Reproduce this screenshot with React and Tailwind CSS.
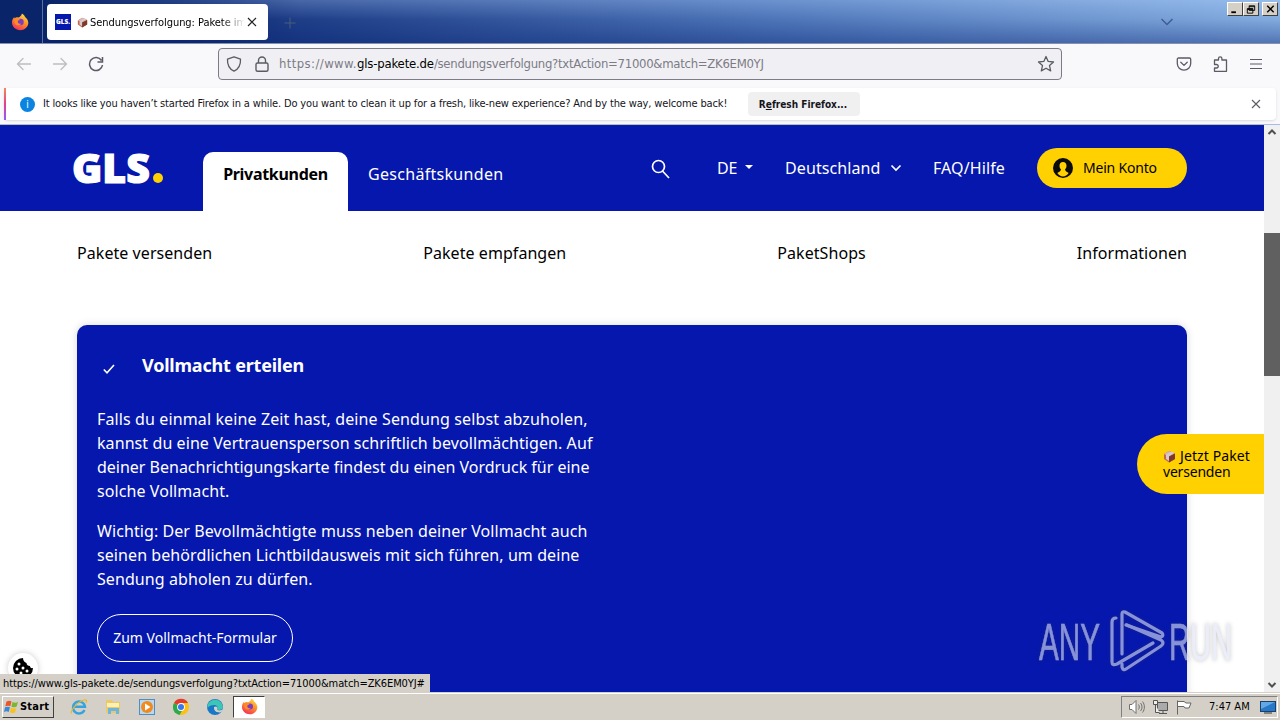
import React from 'react';

const FirefoxIcon = ({ size = 18 }) => (
  <svg width={size} height={size} viewBox="0 0 18 18">
    <defs>
      <linearGradient id="fxBody" x1="0.8" y1="0" x2="0.3" y2="1">
        <stop offset="0" stopColor="#ffe04a" />
        <stop offset="0.45" stopColor="#ff9226" />
        <stop offset="1" stopColor="#f0305c" />
      </linearGradient>
    </defs>
    <path
      d="M11 0.500c2 1.200 2.600 2.300 2.900 3.200C16 5.500 17.300 7.500 17.300 9.800 17.300 14 13.500 17.300 9.200 17.300 4.700 17.300 1 13.800 1 9.600c0-2.200.8-4.200 2.300-5.600 0 .7.200 1.200.5 1.500C5 4.300 6 4.300 7 4.400 8.500 4.500 10.200 3 11 .5z"
      fill="url(#fxBody)"
    />
    <circle cx="9.500" cy="9" r="3.200" fill="#7a3fc0" />
    <path d="M3.500 5.500c2-1 4-.5 5.500 1.500-1.500.2-2.300.8-2.300 1.800 0 1.500 1.300 2.300 3.300 1.900-1.200 2.500-5.500 2-6.500-1z" fill="#ff8a2a" />
  </svg>
);

const BoxIcon = ({ className }) => (
  <svg width="13" height="13" viewBox="0 0 13 13" className={className}>
    <path d="M1 4l5-3 6 2.500v5.500l-6 3.500-5-3.500z" fill="#c4684c" />
    <path d="M1 4l5-3 6 2.500-6 3z" fill="#d9b8aa" />
    <path d="M6 6.500l6-3v5.500l-6 3.500z" fill="#7d3a2c" />
    <path d="M3 5l5.500-3.500 2.500 1L6 6v5l-3-2z" fill="#d6c9d2" />
  </svg>
);

const BackForward = ({ flip }) => (
  <svg width="16" height="16" viewBox="0 0 16 16" className={flip ? 'rotate-180' : ''} fill="none" stroke="#bdbcc2" strokeWidth="1.300" strokeLinecap="round">
    <path d="M1.500 8h13M7 2.500L1.500 8 7 13.500" />
  </svg>
);

const TabStrip = () => (
  <div className="relative flex h-[43px] shrink-0 items-start bg-[linear-gradient(to_right,#0a246a_0%,#102c78_14%,#5178bb_60%,#8db5e6_100%)]">
    <div className="absolute inset-0 bg-[linear-gradient(to_bottom,rgba(170,205,250,0.3),rgba(40,80,150,0.1)_45%,rgba(10,40,120,0.45))]" />
    <div className="absolute inset-y-0 left-0 w-[300px] bg-[linear-gradient(to_right,#0a246a_15%,transparent)]" />
    <div className="relative flex h-[43px] w-[43px] items-center justify-center border-r border-[#5a70a0] pr-[3px]">
      <FirefoxIcon size={18} />
    </div>
    <div className="relative mt-1 ml-1 flex h-9 w-[221px] items-center rounded bg-white pl-2">
      <div className="flex h-4 w-4 items-center justify-center bg-[#0517ad] font-['Open_Sans',sans-serif] text-[6.500px] font-extrabold text-white">GLS.</div>
      <BoxIcon className="ml-[6px] h-[11px] w-[11px]" />
      <div className="mt-[2px] ml-[2px] w-[155px] overflow-hidden whitespace-nowrap bg-[linear-gradient(to_right,#000_85%,transparent)] bg-clip-text text-[11px] tracking-[-0.04px] text-transparent">
        Sendungsverfolgung: Pakete im
      </div>
      <svg width="10" height="10" viewBox="0 0 10 10" className="ml-[2px]" stroke="#222" strokeWidth="1.200">
        <path d="M1 1l8 8M9 1L1 9" />
      </svg>
    </div>
    <svg width="12" height="12" viewBox="0 0 12 12" className="relative mt-[17px] ml-4" stroke="#4b5f78" strokeWidth="1">
      <path d="M6 0.500v11M0.500 6h11" />
    </svg>
    <svg width="12" height="8" viewBox="0 0 12 8" className="relative mt-[18px] ml-auto mr-[54px]" fill="none" stroke="#3d5f95" strokeWidth="1.500">
      <path d="M0.500 1l5.500 5.500L11.500 1" />
    </svg>
    <div className="relative mt-[2px] mr-[2px] flex">
      <WindowButton><path d="M3 9h5v2H3z" fill="#000" stroke="none" /></WindowButton>
      <WindowButton><path d="M5 3h6v5H5zM5 4h6M3 6h6v5H3zM3 7h6" fill="none" /></WindowButton>
      <div className="w-[3px]" />
      <WindowButton><path d="M4 3l7 7M11 3l-7 7" strokeWidth="1.600" /></WindowButton>
    </div>
  </div>
);

const WindowButton = ({ children }) => (
  <div className="h-[14px] w-4 border border-t-white border-r-[#404040] border-b-[#404040] border-l-white bg-[#d4d0c8]">
    <svg width="14" height="12" viewBox="0 0 14 13" stroke="#000">{children}</svg>
  </div>
);

const Toolbar = () => (
  <div className="flex h-[45px] shrink-0 items-start border-t border-[#8591ad] bg-[#f9f9fb] pt-1">
    <div className="flex h-8 w-[218px] items-center gap-5 pl-4">
      <BackForward />
      <BackForward flip />
      <svg width="16" height="16" viewBox="0 0 16 16" fill="none" stroke="#5b5b66" strokeWidth="1.500">
        <path d="M13.500 4.500A6.500 6.500 0 1 0 14.500 9M14.500 1v5h-5" />
      </svg>
    </div>
    <div className="flex h-8 w-[844px] items-center rounded border border-[#7d7c86] bg-[#f0f0f4] pl-[7px] text-[13px] text-[#7c7b85]">
      <svg width="16" height="16" viewBox="0 0 16 16" fill="none" stroke="#5b5b66" strokeWidth="1.300">
        <path d="M8 0.800l6.500 2.400c.3 5.500-2 9.800-6.500 12C3.500 13 1.200 8.700 1.500 3.200z" strokeLinejoin="round" />
      </svg>
      <svg width="16" height="16" viewBox="0 0 16 16" className="ml-3" fill="none" stroke="#5b5b66" strokeWidth="1.400">
        <rect x="2" y="7" width="12" height="8.300" rx="1.500" />
        <path d="M4.500 7V4.500a3.500 3.500 0 0 1 7 0V7" />
      </svg>
      <div className="ml-[9px] w-[758px] whitespace-nowrap">
        <span className="tracking-[0.4px]">https://www.</span>
        <span className="tracking-[-0.175px] text-black">gls-pakete.de</span>
        <span className="tracking-[-0.285px]">/sendungsverfolgung?txtAction=71000&amp;match=ZK6EM0YJ</span>
      </div>
      <svg width="18" height="18" viewBox="0 0 18 18" fill="none" stroke="#5b5b66" strokeWidth="1.300" strokeLinejoin="round">
        <path d="M9 1.500l2.200 4.900 5.300.6-4 3.600 1.200 5.300L9 13.200l-4.700 2.700 1.200-5.300-4-3.600 5.300-.6z" />
      </svg>
    </div>
    <div className="ml-auto flex h-8 items-center gap-5 pr-4">
      <svg width="16" height="16" viewBox="0 0 16 16" fill="none" stroke="#5b5b66" strokeWidth="1.300" strokeLinejoin="round" strokeLinecap="round">
        <path d="M2.500 2h11c.7 0 1.200.5 1.200 1.200V7.500a6.700 6.700 0 0 1-13.400 0V3.200C1.300 2.500 1.800 2 2.500 2zM4.800 6.300L8 9.400l3.200-3.100" />
      </svg>
      <svg width="16" height="16" viewBox="0 0 16 16" fill="none" stroke="#5b5b66" strokeWidth="1.300" strokeLinejoin="round">
        <path d="M6.500 4V2.500a1.700 1.700 0 0 1 3.400 0V4h4.600v11.300H2.500V12h2a1.700 1.700 0 0 0 0-3.500h-2V4z" />
      </svg>
      <svg width="16" height="16" viewBox="0 0 16 16" stroke="#5b5b66" strokeWidth="1.200">
        <path d="M2 3.500h12M2 8h12M2 12.500h12" />
      </svg>
    </div>
  </div>
);

const Notification = () => (
  <div className="flex h-[37px] shrink-0 border-b border-[#a9b8ef] bg-[#f9f9fb] pl-1">
    <div className="flex h-8 w-[1272px] items-center rounded bg-white pr-[15px] shadow-sm">
      <div className="h-8 w-[2px] bg-[linear-gradient(to_bottom,#f08a5c,#e0408c,#9059ff)]" />
      <div className="ml-[14px] flex h-[15px] w-[15px] items-center justify-center rounded-full bg-[#0a84e0] text-[10px] text-white">i</div>
      <div className="ml-2 w-[705px] whitespace-nowrap text-[11px] tracking-[-0.147px] text-[#15141a]">
        It looks like you haven’t started Firefox in a while. Do you want to clean it up for a fresh, like-new experience? And by the way, welcome back!
      </div>
      <div className="flex h-6 w-[112px] items-center justify-center rounded bg-[#f0f0f1] pr-[2px] text-[10px] font-bold whitespace-nowrap text-[#15141a]">
        R<span className="underline">e</span>fresh Firefox...
      </div>
      <svg width="10" height="10" viewBox="0 0 10 10" className="ml-auto" stroke="#5b5b66" strokeWidth="1.100">
        <path d="M1 1l8 8M9 1L1 9" />
      </svg>
    </div>
  </div>
);

const SiteHeader = () => (
  <div className="flex h-[86px] shrink-0 items-start border-t border-[#10207c] bg-[#0517ad] pl-[72px] text-white">
    <div className="mt-[17px] flex w-[131px] items-end font-['Open_Sans',sans-serif] text-[41px] leading-[48px] font-extrabold">
      <div className="w-[81px] [-webkit-text-stroke:1.200px_white]">GLS</div>
      <div className="mb-[8px] h-[10px] w-[10px] rounded-full bg-[#ffd100]" />
    </div>
    <div className="mt-[26px] flex h-[59px] w-[145px] items-start justify-center rounded-t-[10px] bg-white pt-[10px] text-base font-bold tracking-[-0.3px] text-black">
      Privatkunden
    </div>
    <div className="mt-9 ml-5 w-[283px] text-base tracking-[0.3px]">Geschäftskunden</div>
    <svg width="20" height="20" viewBox="0 0 20 20" className="mt-[33px]" fill="none" stroke="#fff" strokeWidth="1.700">
      <circle cx="7.500" cy="7.500" r="6" />
      <path d="M11.500 12l6.500 7" />
    </svg>
    <div className="mt-[30px] ml-[46px] flex w-[68px] items-center text-base">
      <div className="tracking-[-0.3px]">DE</div>
      <span className="ml-2 mb-[2px] border-x-4 border-t-4 border-x-transparent border-t-white" />
    </div>
    <div className="mt-[30px] flex w-[148px] items-center text-base">
      <div className="w-[105px] tracking-[0.1px]">Deutschland</div>
      <svg width="12" height="8" viewBox="0 0 12 8" fill="none" stroke="#fff" strokeWidth="1.700">
        <path d="M1.500 1.500L6 6l4.500-4.500" />
      </svg>
    </div>
    <div className="mt-[30px] w-[104px] text-base tracking-[0.1px]">FAQ/Hilfe</div>
    <div className="mt-[22px] flex h-10 w-[150px] items-center rounded-full bg-[#ffd100] pl-4 text-sm tracking-[-0.2px] text-black">
      <svg width="20" height="20" viewBox="0 0 20 20" className="mr-[10px]">
        <circle cx="10" cy="10" r="10" fill="#0b0b0b" />
        <path d="M10 4c2.200 0 3.500 1.500 3.500 3.700 0 1.600-.7 2.900-1.500 3.600.2 1.700 1 2.200 3.700 3.700-1.500 2.300-3.500 3.500-5.700 3.500s-4.200-1.200-5.700-3.500c2.700-1.500 3.500-2 3.700-3.700-.8-.7-1.500-2-1.500-3.600C6.500 5.500 7.800 4 10 4z" fill="#ffd100" />
      </svg>
      Mein Konto
    </div>
  </div>
);

const navItems = ['Pakete versenden', 'Pakete empfangen', 'PaketShops', 'Informationen'];

const AnyRun = () => (
  <div className="absolute top-[485px] left-[1039px] opacity-60 drop-shadow-[0_0_2px_rgba(60,60,70,0.5)]">
    <svg width="200" height="62" viewBox="0 0 200 62" fill="none" stroke="#dfe4f4">
      <g fill="#dfe4f4" strokeWidth="0.600" fontFamily="'Liberation Sans', sans-serif" fontSize="52">
        <text x="0" y="50" textLength="61" lengthAdjust="spacingAndGlyphs">ANY</text>
        <text x="130" y="50" textLength="63" lengthAdjust="spacingAndGlyphs">RUN</text>
      </g>
      <g strokeWidth="3.200" strokeLinejoin="round" strokeLinecap="round">
        <path d="M77 8q-4 0-4 4V52q0 4 5 2L114 33" />
        <path d="M83 44V4q0-3 3-2L123 23q2 3-1 4L87 15" />
        <path d="M83 54v3q1 4 4 2L122 36q4-3 0-6L88 15" />
      </g>
    </svg>
  </div>
);

const Page = () => (
  <div className="relative flex h-[567px] shrink-0 overflow-hidden bg-white font-['Noto_Sans',sans-serif]">
    <div className="flex w-[1264px] flex-col">
      <SiteHeader />
      <div className="mt-[30px] flex justify-between pr-[77px] pl-[77px] text-base tracking-[0.06px] text-black">
        {navItems.map((item) => (
          <div key={item}>{item}</div>
        ))}
      </div>
      <div className="mx-[77px] mt-[60px] h-[420px] shrink-0 rounded-t-[10px] bg-[#0517ad] px-5 pt-[27px] text-white shadow-[0_0_8px_rgba(0,0,0,0.15)]">
        <div className="flex items-center">
          <svg width="12" height="10" viewBox="0 0 12 10" className="mt-[7px] ml-[6px] mr-[27px]" fill="none" stroke="#fff" strokeWidth="1.600">
            <path d="M0.800 5.500L4 8.800 11 1" />
          </svg>
          <div className="text-lg leading-[26px] font-bold tracking-[-0.2px]">Vollmacht erteilen</div>
        </div>
        <p className="mt-[29px] text-base leading-6 tracking-[0.08px] whitespace-nowrap">
          <span className="tracking-[0.12px]">Falls du einmal keine Zeit hast, deine Sendung selbst abzuholen,</span><br />
          kannst du eine Vertrauensperson schriftlich bevollmächtigen. Auf<br />
          <span className="tracking-[-0.01px]">deiner Benachrichtigungskarte findest du einen Vordruck für eine</span><br />
          solche Vollmacht.
        </p>
        <p className="mt-4 text-base leading-6 tracking-[0.08px] whitespace-nowrap">
          Wichtig: Der Bevollmächtigte muss neben deiner Vollmacht auch<br />
          seinen behördlichen Lichtbildausweis mit sich führen, um deine<br />
          Sendung abholen zu dürfen.
        </p>
        <div className="mt-[23px] flex h-12 w-[196px] items-center justify-center rounded-full border border-white text-sm">
          Zum Vollmacht-Formular
        </div>
      </div>
    </div>
    <div className="flex w-4 flex-col items-center bg-[#f0f0f0]">
      <svg width="10" height="8" viewBox="0 0 10 8" className="mt-[3px]" fill="none" stroke="#505050" strokeWidth="2">
        <path d="M1.500 6L5 2.500 8.500 6" />
      </svg>
      <div className="mt-[97px] h-[143px] w-4 bg-[#606060]" />
      <svg width="10" height="8" viewBox="0 0 10 8" className="mt-auto mb-[3px]" fill="none" stroke="#505050" strokeWidth="2">
        <path d="M1.500 2L5 5.500 8.500 2" />
      </svg>
    </div>

    <div className="absolute top-[309px] left-[1137px] h-[60px] w-[127px] rounded-l-full bg-[#ffd100] pt-[14px] pl-[26px] text-sm leading-4 text-black">
      <div className="flex items-center tracking-[0.1px]">
        <BoxIcon className="mr-1" />
        Jetzt Paket
      </div>
      <div className="tracking-[-0.2px]">versenden</div>
    </div>
    <div className="absolute top-[528px] left-2 flex h-[30px] w-[30px] items-center justify-center rounded-full bg-white shadow-[0_0_6px_rgba(0,0,0,0.2)]">
      <svg width="22" height="22" viewBox="0 0 22 22">
        <path d="M11 1a10 10 0 1 0 10 10c-2 .5-3-.5-3-2-2 0-3.500-1-3.500-3C12.500 5.500 11 3.500 11 1z" fill="#000" />
        <g fill="#fff">
          <circle cx="7" cy="7" r="1.500" />
          <circle cx="5" cy="12" r="1.500" />
          <circle cx="11" cy="11" r="1.500" />
          <circle cx="15" cy="14" r="1.500" />
          <circle cx="9" cy="16" r="1.500" />
        </g>
      </svg>
    </div>
    <AnyRun />
    <div className="absolute bottom-0 left-0 h-[18px] w-[430px] bg-[#d4d0c8] pl-[3px] font-['DejaVu_Sans_Condensed','DejaVu_Sans',sans-serif] text-[11px] leading-[20px] tracking-[-0.085px] whitespace-nowrap text-black">
      https://www.gls-pakete.de/sendungsverfolgung?txtAction=71000&amp;match=ZK6EM0YJ#
    </div>
  </div>
);

const Taskbar = () => (
  <div className="flex h-7 shrink-0 items-center border-t border-[#d4d0c8] bg-[#d4d0c8] shadow-[inset_0_1px_0_#fff]">
    <div className="ml-[2px] flex h-[22px] w-[52px] items-center border border-t-white border-r-[#404040] border-b-[#404040] border-l-white pl-px text-[11px] font-bold">
      <svg width="16" height="16" viewBox="0 0 16 16">
        <path d="M2.500 2.500c2-1 3.500-1 5 0L6.300 7.300c-1.500-.9-3-.9-5 0z" fill="#e8562a" />
        <path d="M8.500 2.900c2 1 3.500 1 5.500.1l-1.300 4.600c-2 1-3.500.8-5.300-.2z" fill="#7cb82f" />
        <path d="M1 8.300c2-.9 3.500-.9 5 0L4.700 13c-1.500-.9-3-.9-4.700 0z" fill="#3a86d8" />
        <path d="M7 8.700c1.800 1 3.300 1.100 5.300.2L11 13.500c-2 .9-3.500.8-5.200-.2z" fill="#f8c21c" />
      </svg>
      <div className="mt-[2px] tracking-[0.2px]">Start</div>
    </div>
    <div className="ml-4 flex items-center gap-4">
      <svg width="18" height="18" viewBox="0 0 18 18" fill="none">
        <path d="M14.500 12A6 6 0 1 1 15 8.800H4" stroke="#35a3df" strokeWidth="2.400" />
        <path d="M1.500 15.500C0 13 7 4 14 2c3-.8 3 1 2 3" stroke="#e9b72e" strokeWidth="1.200" />
      </svg>
      <svg width="18" height="18" viewBox="0 0 18 18">
        <path d="M2 2h6l1 2h7v11H2z" fill="#ecc964" />
        <path d="M3 5h12v4H3z" fill="#fbf0b8" />
        <path d="M4 16v-6h11v6h-3v-3H7v3z" fill="#6db5dd" />
      </svg>
      <svg width="18" height="18" viewBox="0 0 18 18">
        <rect x="1.500" y="1.500" width="15" height="15" fill="#b9d8ef" stroke="#4b8fc4" />
        <circle cx="9" cy="9" r="6" fill="#f08a1c" />
        <path d="M7 5.500l5.500 3.500L7 12.500z" fill="#fff" />
      </svg>
      <svg width="18" height="18" viewBox="0 0 18 18">
        <circle cx="9" cy="9" r="8" fill="#fbc116" />
        <path d="M9 9L2 5A8 8 0 0 1 16 5H9z" fill="#e33b2e" />
        <path d="M9 9L2 5a8 8 0 0 0 5.500 11.900L11 11z" fill="#2da94f" />
        <circle cx="9" cy="9" r="3.900" fill="#fff" />
        <circle cx="9" cy="9" r="3" fill="#3b78e7" />
      </svg>
      <svg width="18" height="18" viewBox="0 0 18 18">
        <circle cx="9" cy="9" r="8" fill="#1878c8" />
        <path d="M1.500 7A8 8 0 0 1 17 9c0 3-4 3.500-6 2.500 1.500-2 .5-4.500-3-4.500-3 0-5 1-6.500 3z" fill="#3cc6b6" />
        <path d="M8 9c-.5 4 3 6 7 5.300A5 5 0 0 0 17 11c-2 2-5 1.500-6 .5 1-1 .5-2.500-1-3z" fill="#d4d0c8" />
      </svg>
    </div>
    <div className="ml-[9px] flex h-[22px] w-8 items-center justify-center border border-t-[#404040] border-r-white border-b-white border-l-[#404040] bg-white">
      <FirefoxIcon size={17} />
    </div>
    <div className="ml-auto mr-[2px] flex h-[22px] w-[157px] items-center border border-t-[#808080] border-r-white border-b-white border-l-[#808080] pl-[6px] text-[11px]">
      <svg width="17" height="16" viewBox="0 0 17 16" fill="none" stroke="#707070">
        <path d="M1.500 5.500h2.500l4-4v13l-4-4H1.500z" fill="#fff" />
        <path d="M10.500 5.500c1 1.500 1 3.500 0 5M12.500 4c2 2.500 2 5.500 0 8M14.500 2.500c2.500 3 2.500 8 0 11" />
      </svg>
      <svg width="17" height="16" viewBox="0 0 17 16" className="ml-[7px]" stroke="#555">
        <path d="M5.500 3.500h10v8h-10z" fill="#aaa" />
        <path d="M7 14.500h8M11 12v2" fill="none" />
        <path d="M1.500 1.500h4v4h-4zM3.500 5.500v8h4" fill="#eee" />
      </svg>
      <svg width="17" height="16" viewBox="0 0 17 16" className="ml-[7px]" fill="#fff" stroke="#666">
        <path d="M1.500 15.500V1.500M2 2.500h6l2 1.500h5l-2 5H9L8 7.500H2" />
      </svg>
      <div className="mt-[2px] ml-4 w-[45px] whitespace-nowrap">7:47 AM</div>
      <svg width="16" height="14" viewBox="0 0 16 14" className="ml-[6px]">
        <rect x="0.500" y="1.500" width="15" height="10" fill="#2878c8" stroke="#1d3f70" />
        <path d="M1 2h14L1 9z" fill="#62a8e5" />
        <path d="M4 13h8" stroke="#333" />
      </svg>
    </div>
  </div>
);

const App = () => (
  <div className="flex h-[720px] w-[1280px] flex-col overflow-hidden font-['DejaVu_Sans_Condensed','DejaVu_Sans',sans-serif] text-black">
    <TabStrip />
    <Toolbar />
    <Notification />
    <Page />
    <Taskbar />
  </div>
);

export default App;
